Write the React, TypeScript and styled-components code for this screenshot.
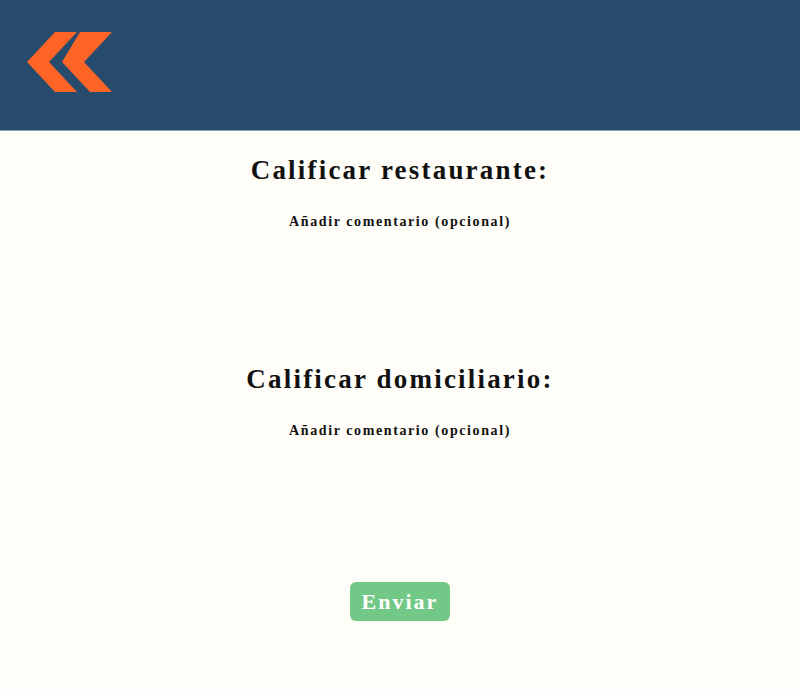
import styled, { createGlobalStyle } from "styled-components";

const GlobalStyle = createGlobalStyle`
  body {
    margin: 0;
    background: #fffdf8;
    font-family: "Liberation Serif", "DejaVu Serif", serif;
  }
`;

const Page = styled.div`
  min-height: 690px;
  background: #fffdf8;
`;

const Header = styled.header`
  height: 131px;
  background: #264b6d;
  border-bottom: 1px solid #8aa0b5;
  display: flex;
  align-items: flex-start;
  padding: 32px 0 0 27px;
  box-sizing: border-box;
`;

const Main = styled.main`
  display: flex;
  flex-direction: column;
  align-items: center;
`;

const Section = styled.section<{ height: number }>`
  height: ${(props) => props.height}px;
  display: flex;
  flex-direction: column;
  align-items: center;
`;

const Title = styled.h2`
  margin: 21px 0 0;
  font-size: 27px;
  font-weight: 700;
  letter-spacing: 2.2px;
  color: #111;
  line-height: 36px;
`;

const Subtitle = styled.p`
  margin: 24px 0 0;
  font-size: 14px;
  font-weight: 700;
  letter-spacing: 1.6px;
  color: #111;
  line-height: 20px;
`;

const SendButton = styled.button`
  width: 100px;
  height: 39px;
  border: none;
  border-radius: 6px;
  background: #72c987;
  color: #fff;
  font-family: inherit;
  font-size: 22px;
  font-weight: 700;
  letter-spacing: 2px;
  cursor: pointer;
`;

function BackLogo() {
  return (
    <svg width="86" height="60" viewBox="27 32 86 60">
      <polygon points="27,62 55,32 77,32 49,62 77,92 55,92" fill="#ff6427" />
      <polygon points="62,62 80,32 112,32 84,62 112,92 90,92" fill="#ff6427" />
    </svg>
  );
}

export default function App() {
  return (
    <Page>
      <GlobalStyle />
      <Header>
        <BackLogo />
      </Header>
      <Main>
        <Section height={209}>
          <Title>Calificar restaurante:</Title>
          <Subtitle>Añadir comentario (opcional)</Subtitle>
        </Section>
        <Section height={242}>
          <Title>Calificar domiciliario:</Title>
          <Subtitle>Añadir comentario (opcional)</Subtitle>
        </Section>
        <SendButton>Enviar</SendButton>
      </Main>
    </Page>
  );
}
